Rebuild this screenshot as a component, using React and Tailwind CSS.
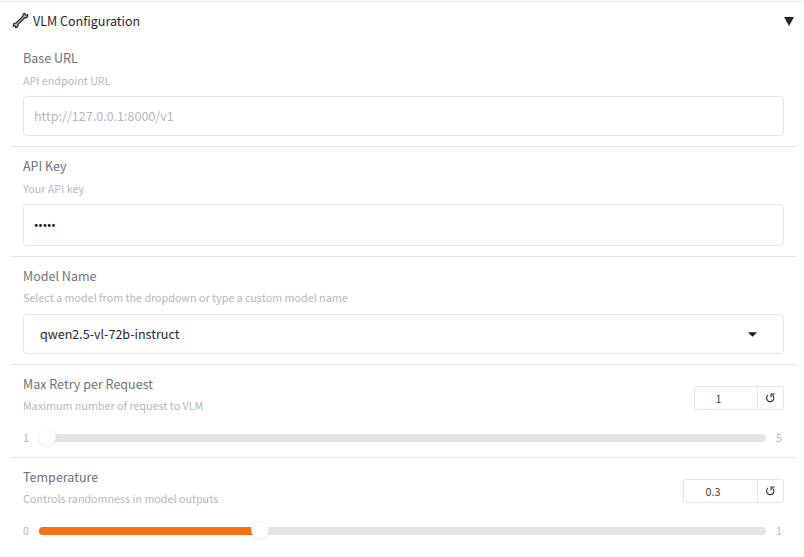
const FONT = "font-['Noto_Sans_CJK_SC','Open_Sans',sans-serif]";

function Wrench() {
  return (
    <svg className="ml-px" width="17" height="17" viewBox="0 0 17 17" fill="none" strokeLinejoin="round" strokeLinecap="round">
      <path
        d="M1.4 12.6 C1.5 11.4 2.8 10.8 4.1 11 L10.9 4.3 C10.6 2.9 11.3 1.6 12.9 1.3 L13.2 2.9 L14.2 3.3 L15.7 2.6 C16.2 4.3 14.9 5.9 12.7 5.9 L5.9 12.6 C6.3 14.1 5.2 15.4 3.7 15.8 L3.4 14.3 L2.4 13.8 L1.3 14.4 Z"
        fill="#b8b8b8"
        stroke="#1c1c1c"
        strokeWidth="1.1"
      />
    </svg>
  );
}

function ResetIcon() {
  return (
    <svg width="9" height="10" viewBox="0 0 9 10" fill="none" stroke="#27272a">
      <path d="M2 1.9 C.2 3.3 .2 6.2 1.7 7.6 C3.2 9 5.7 9 7 7.4 C8.2 5.9 8.1 3.6 6.5 2.3" strokeWidth="1.1" />
      <path d="M8.7 1 H5.1 V4.3" strokeWidth="1.1" />
    </svg>
  );
}

function Heading({ label, info, tight }) {
  return (
    <div>
      <div className="h-5 text-[12.54px] leading-5 text-[#71717a]">{label}</div>
      <div className={`${tight ? "mt-[3px]" : "mt-1"} h-[18px] text-[10.74px] leading-[18px] text-[#b6b6bc]`}>{info}</div>
    </div>
  );
}

function Section({ children, last }) {
  return (
    <section className={`px-3 pt-[9px] ${last ? "" : "border-b border-[#e4e4e7]"}`}>{children}</section>
  );
}

function SliderField({ label, info, value, min, max, percent, boxClass, last }) {
  return (
    <Section last={last}>
      <div className="flex justify-between">
        <Heading label={label} info={info} tight />
        <div className={`mt-3 flex h-6 rounded-[3px] border border-[#e4e4e7] text-[#3f3f46] ${boxClass}`}>
          <div className="flex-1 pr-[15px] text-center text-[10.74px] leading-[24px]">{value}</div>
          <div className="flex w-[26px] items-center justify-center border-l border-[#e4e4e7]">
            <ResetIcon />
          </div>
        </div>
      </div>
      <div className="mt-[13px] flex h-5 items-center text-[10.74px] text-[#b6b6bc]">
        <span className="w-4 leading-5">{min}</span>
        <div className="relative h-2 flex-1 rounded-full bg-[#e4e4e7]">
          <div className="h-2 rounded-full bg-[#f97316]" style={{ width: `${percent}%` }} />
          <div
            className="absolute -top-[5px] size-4 rounded-full bg-white shadow-[0_0_0_1px_rgba(247,245,244,1),0_1px_4px_rgba(0,0,0,0.1)]"
            style={{ left: `calc(${percent}% - ${percent * 0.16}px)` }}
          />
        </div>
        <span className="w-[18px] pl-[10px] leading-5">{max}</span>
      </div>
      <div className="h-[9px]" />
    </Section>
  );
}

export default function App() {
  return (
    <main className={`h-[557px] w-[804px] overflow-hidden bg-white pt-px ${FONT}`}>
      <div className="border-t border-[#e4e4e7] pr-2 pl-[11px]">
        <header className="flex h-[37px] items-center text-[12.54px] leading-5 text-[#27272a]">
          <Wrench />
          <span className="ml-1">VLM Configuration</span>
          <svg className="mt-px mr-[2px] ml-auto" width="10" height="9" viewBox="0 0 10 9">
            <path d="M0 0H10L5 9Z" fill="#27272a" />
          </svg>
        </header>
        <Section>
          <Heading label="Base URL" info="API endpoint URL" />
          <div className="mt-1.5 mb-2.5 h-10 rounded-[4px] border border-[#e4e4e7] px-2.5 text-[12.54px] leading-[38px] text-[#b5b5bb]">http://127.0.0.1:8000/v1</div>
        </Section>
        <Section>
          <Heading label="API Key" info="Your API key" />
          <div className="mt-1.5 mb-2.5 flex h-[42px] items-center rounded-[4px] border border-[#e4e4e7] px-2.5 text-[12.54px] text-[#18181b]">
            <span className="pt-0.5 font-['Roboto',sans-serif] text-[12px] leading-5 font-bold">•••••</span>
          </div>
        </Section>
        <Section>
          <Heading label="Model Name" info="Select a model from the dropdown or type a custom model name" tight />
          <div className="mt-[7px] mb-2.5 flex h-10 items-center justify-between rounded-[4px] border border-[#e4e4e7] pr-[26px] pl-4 text-[12.54px] text-[#27272a]">
            <span>qwen2.5-vl-72b-instruct</span>
            <svg width="9" height="5" viewBox="0 0 9 5">
              <path d="M0 .3H9L4.5 4.8Z" fill="#18181b" />
            </svg>
          </div>
        </Section>
        <SliderField label="Max Retry per Request" info="Maximum number of request to VLM" value="1" min="1" max="5" percent={0} boxClass="w-[90px]" />
        <SliderField label="Temperature" info="Controls randomness in model outputs" value="0.3" min="0" max="1" percent={30} boxClass="w-[101px]" last />
      </div>
    </main>
  );
}
